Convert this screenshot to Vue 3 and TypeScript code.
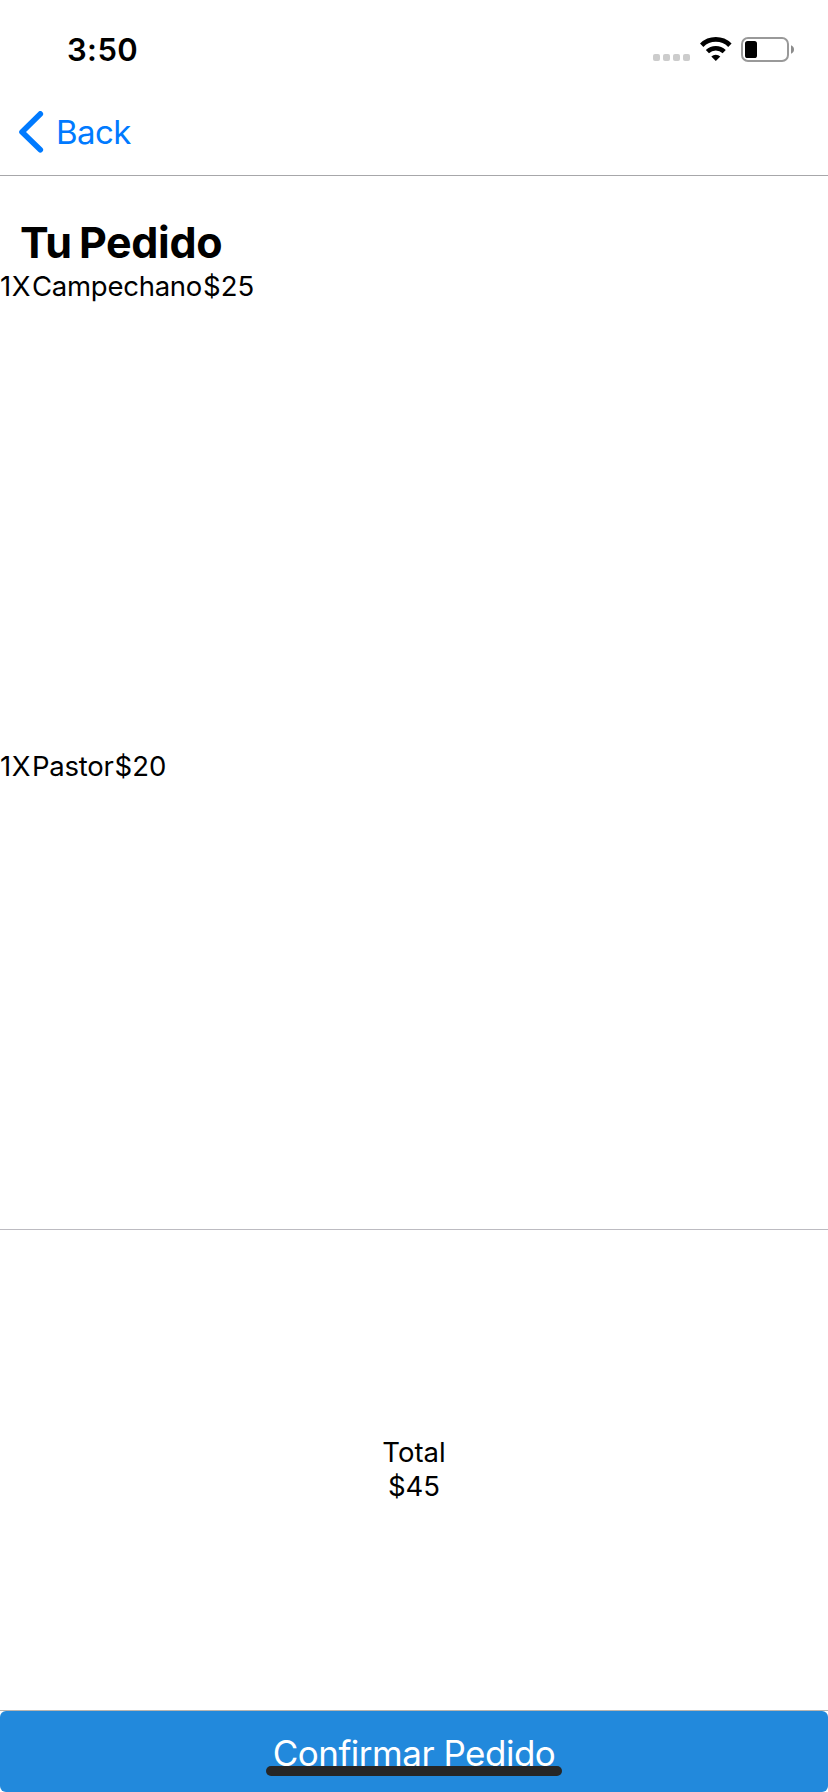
<script setup lang="ts">
interface OrderItem {
  name: string
  quantity: number
  price: number
}

const items: OrderItem[] = [
  { name: 'Campechano', quantity: 1, price: 25 },
  { name: 'Pastor', quantity: 1, price: 20 },
]

const total = items.reduce((sum, item) => sum + item.quantity * item.price, 0)
</script>

<template>
  <div class="screen">
    <div class="status">
      <span class="time">3:50</span>
      <div class="indicators">
        <div class="signal"><i v-for="n in 4" :key="n"></i></div>
        <svg class="wifi" width="32" height="24" viewBox="0 0 32 24" fill="none" stroke="#000">
          <path d="M1.7 8.2 A20.2 20.2 0 0 1 29.9 8.2" stroke-width="4.8" />
          <path d="M7.4 14.6 A12.3 12.3 0 0 1 24.2 14.6" stroke-width="4.6" />
          <path d="M15.8 24 L11.3 19.6 A6.6 6.6 0 0 1 20.3 19.6 Z" fill="#000" stroke="none" />
        </svg>
        <svg class="battery" width="54" height="25" viewBox="0 0 54 25">
          <rect x="1" y="1" width="46" height="23" rx="6" fill="none" stroke="#999" stroke-width="2" />
          <rect x="4" y="4" width="12" height="17" rx="2.6" fill="#000" />
          <path d="M50 8.3 Q53 9.5 53 12.5 Q53 15.5 50 16.7 Z" fill="#8c8c8c" />
        </svg>
      </div>
    </div>

    <nav class="nav">
      <button class="back">
        <svg width="26" height="42" viewBox="0 0 26 42" fill="none" stroke="#007aff" stroke-width="5.6" stroke-linecap="round" stroke-linejoin="round">
          <path d="M22.3 2.9 L4 21 L22.3 38.8" />
        </svg>
        <span>Back</span>
      </button>
    </nav>

    <main class="order">
      <h1>Tu Pedido</h1>
      <div v-for="item in items" :key="item.name" class="item">
        <span class="quantity">{{ item.quantity }}X</span><span class="name">{{ item.name }}</span><span>${{ item.price }}</span>
      </div>
    </main>

    <section class="total">
      <span>Total</span>
      <span>${{ total }}</span>
    </section>

    <footer class="footer">
      <button class="confirm">Confirmar Pedido</button>
      <div class="home-bar"></div>
    </footer>
  </div>
</template>

<style>
body {
  margin: 0;
  background: #fff;
}
</style>

<style scoped>
.screen {
  width: 828px;
  height: 1792px;
  display: flex;
  flex-direction: column;
  overflow: hidden;
  background: #fff;
  color: #000;
  font-family: Inter, "Liberation Sans", sans-serif;
}

button {
  border: 0;
  padding: 0;
  margin: 0;
  background: none;
  font-family: inherit;
}

.status {
  height: 88px;
  flex: none;
  display: flex;
  justify-content: space-between;
  box-sizing: border-box;
  padding: 30px 33px 0 67px;
}

.time {
  font-size: 31px;
  line-height: 40px;
  font-weight: 600;
  letter-spacing: 0.4px;
}

.indicators {
  display: flex;
  align-items: flex-start;
  padding-top: 7px;
}

.signal {
  display: flex;
  gap: 3px;
  margin: 17px 10px 0 0;
}

.signal i {
  width: 7px;
  height: 7px;
  border-radius: 2px;
  background: #ccc;
}

.wifi {
  margin-right: 9px;
}

.nav {
  height: 88px;
  flex: none;
  box-sizing: border-box;
  border-bottom: 1px solid #a7a7aa;
}

.back {
  display: flex;
  align-items: center;
  margin: 22px 0 0 18px;
  height: 44px;
  color: #007aff;
  font-size: 33px;
  line-height: 44px;
  letter-spacing: -0.6px;
}

.back span {
  margin-left: 12px;
}

.order {
  height: 1053px;
  flex: none;
  box-sizing: border-box;
  padding-top: 39px;
  overflow: hidden;
}

h1 {
  margin: 0 0 0 20px;
  font-size: 43px;
  line-height: 54px;
  font-weight: 700;
  letter-spacing: -0.35px;
  word-spacing: -2.5px;
}

.item {
  height: 480px;
  display: flex;
  font-size: 27.5px;
  line-height: 34px;
}

.quantity {
  letter-spacing: 0.5px;
  margin-right: 1px;
}

.name {
  letter-spacing: -0.25px;
  margin-right: 1px;
}

.total {
  flex: 1;
  display: flex;
  flex-direction: column;
  align-items: center;
  justify-content: center;
  box-sizing: border-box;
  padding-bottom: 2px;
  border-top: 1px solid #bcbbc1;
  font-size: 27.5px;
  line-height: 34px;
}

.footer {
  position: relative;
  height: 82px;
  flex: none;
  box-sizing: border-box;
  border-top: 1px solid #b8b5b0;
}

.confirm {
  width: 100%;
  height: 81px;
  display: block;
  border-radius: 6px;
  background: #2289dc;
  color: #fff;
  font-size: 35px;
  line-height: 81px;
  padding-top: 2px;
  letter-spacing: -0.5px;
}

.home-bar {
  position: absolute;
  left: 266px;
  bottom: 16px;
  width: 296px;
  height: 10px;
  border-radius: 5px;
  background: #262626;
}
</style>
